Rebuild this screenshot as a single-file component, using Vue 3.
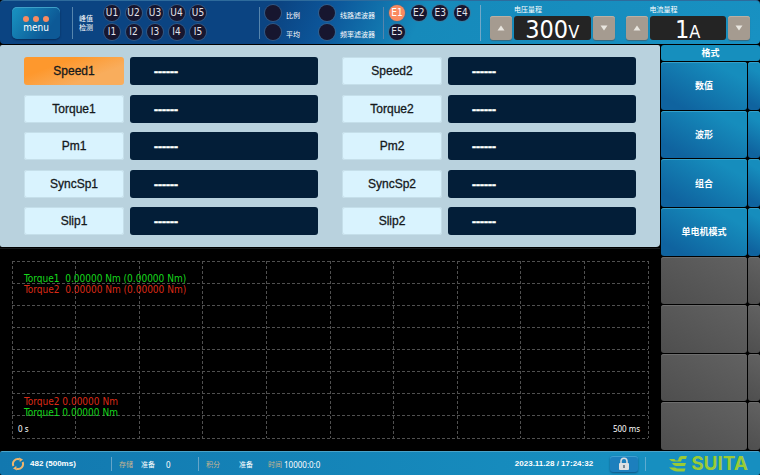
<script setup>
import { ref } from 'vue'

const inputs = ['U1', 'U2', 'U3', 'U4', 'U5', 'I1', 'I2', 'I3', 'I4', 'I5']
const elements = ['E1', 'E2', 'E3', 'E4', 'E5']
const activeElement = ref('E1')
const modes = [
  { id: 'ratio', label: '比例' },
  { id: 'line', label: '线路滤波器' },
  { id: 'average', label: '平均' },
  { id: 'freq', label: '频率滤波器' },
]
const ranges = [
  { label: '电压量程', value: '300', unit: 'V' },
  { label: '电流量程', value: '1', unit: 'A' },
]
const readings = [
  'Speed1', 'Speed2', 'Torque1', 'Torque2', 'Pm1',
  'Pm2', 'SyncSp1', 'SyncSp2', 'Slip1', 'Slip2',
]
const activeReading = ref('Speed1')
const softKeys = ['数值', '波形', '组合', '单电机模式', '', '', '', '']
const columns = Array.from({ length: 11 }, (_, i) => i * 10 + '%')
const rows = Array.from({ length: 9 }, (_, i) => i * 12.5 + '%')
</script>

<template>
  <div class="screen">
    <header class="topbar">
      <button class="menu" type="button">
        <span class="dots"><i></i><i></i><i></i></span>
        <span>menu</span>
      </button>
      <section class="peak">
        <div class="peak-label">峰值<br />检测</div>
        <div class="lamps five">
          <span v-for="name in inputs" :key="name" class="lamp">{{ name }}</span>
        </div>
      </section>
      <section class="modes">
        <label v-for="mode in modes" :key="mode.id" class="mode" :for="mode.id">
          <input :id="mode.id" class="lamp" type="checkbox" />
          <span>{{ mode.label }}</span>
        </label>
      </section>
      <section class="elements">
        <div class="lamps four">
          <button
            v-for="name in elements"
            :key="name"
            type="button"
            class="lamp"
            :class="{ on: name === activeElement }"
            @click="activeElement = name"
          >{{ name }}</button>
        </div>
      </section>
      <section class="ranges">
        <div v-for="range in ranges" :key="range.label" class="range">
          <span class="range-label">{{ range.label }}</span>
          <button class="step" type="button" :aria-label="range.label + ' +'">
            <svg width="8" height="6" viewBox="0 0 8 6"><path d="M4 .5 7.5 5.5h-7z" fill="#e9e6df" /></svg>
          </button>
          <output class="value">{{ range.value }}<small>{{ range.unit }}</small></output>
          <button class="step" type="button" :aria-label="range.label + ' -'">
            <svg width="8" height="6" viewBox="0 0 8 6"><path d="M4 5.5.5.5h7z" fill="#e9e6df" /></svg>
          </button>
        </div>
      </section>
    </header>

    <div class="body">
      <main class="main">
        <section class="panel">
          <div v-for="name in readings" :key="name" class="reading">
            <button
              type="button"
              class="name"
              :class="{ selected: name === activeReading }"
              @click="activeReading = name"
            >{{ name }}</button>
            <output class="readout">------</output>
          </div>
        </section>
        <section class="chart">
          <svg class="grid" width="100%" height="100%">
            <line v-for="x in columns" :key="'x' + x" :x1="x" :x2="x" y1="0" y2="100%" />
            <line v-for="y in rows" :key="'y' + y" :y1="y" :y2="y" x1="0" x2="100%" />
          </svg>
          <div class="legend">
            <div class="green">Torque1&nbsp; 0.00000 Nm (0.00000 Nm)</div>
            <div class="red">Torque2&nbsp; 0.00000 Nm (0.00000 Nm)</div>
          </div>
          <div class="legend low">
            <div class="red">Torque2 0.00000 Nm</div>
            <div class="green">Torque1 0.00000 Nm</div>
          </div>
          <div class="axis"><span>0 s</span><span>500 ms</span></div>
        </section>
      </main>
      <aside class="side">
        <h2 class="side-title">格式</h2>
        <div v-for="(key, i) in softKeys" :key="i" class="key-row">
          <button class="key" :class="{ off: !key }" :disabled="!key" type="button">{{ key }}</button>
          <span class="key edge" :class="{ off: !key }"></span>
        </div>
      </aside>
    </div>

    <footer class="status">
      <svg class="refresh" width="14" height="14" viewBox="0 0 14 14" fill="none" stroke="#f0b56c" stroke-width="2">
        <path d="M2.400 9A5 5 0 0 1 8.500 2.200" />
        <path d="M11.600 5A5 5 0 0 1 5.500 11.800" />
        <path d="M8 .5 12 2.500 8.800 5zM6 13.500 2 11.500 5.200 9z" fill="#f0b56c" stroke="none" />
      </svg>
      <span class="update">482 (500ms)</span>
      <div class="store"><span class="amber">存储</span><span>准备</span><span class="count">0</span></div>
      <div class="integral">
        <span class="amber">积分</span><span class="state">准备</span>
        <span class="timer"><span class="amber">时间</span><span class="digits">10000:0:0</span></span>
      </div>
      <time class="clock">2023.11.28 / 17:24:32</time>
      <button class="lock" type="button" aria-label="Lock">
        <svg width="12" height="14" viewBox="0 0 12 14">
          <path d="M3 6.500V4.200a3 3 0 0 1 6 0V6.500" fill="none" stroke="#d7dce0" stroke-width="1.600" />
          <rect x="1" y="6" width="10" height="7" rx="1" fill="#dde0e2" />
          <path d="M6 8v3" stroke="#5d7180" stroke-width="1.600" />
        </svg>
      </button>
      <div class="brand">
        <svg width="18" height="18" viewBox="0 0 18 18" fill="#9acb35">
          <path d="M0 4h5.500l1 1.500H9L9.800 3Q10.500 1 12.500 1H18l-1 3h-4l-1 2.500H5.500Q2.500 7 0 4z" />
          <path d="M3 8h14l-1 3H7.500Q4.500 11 3 8z" />
          <path d="M0 12.500h6l2 1h8.500l-1 3H8.500Q4 16.500 0 12.500z" />
        </svg>
        <span>SUITA</span>
      </div>
    </footer>
  </div>
</template>

<style>
body {
  margin: 0;
  background: #000;
}
</style>

<style scoped>
* {
  box-sizing: border-box;
}
button {
  border: 0;
  padding: 0;
  margin: 0;
  font-family: inherit;
  color: inherit;
}
.screen {
  min-height: 100vh;
  display: flex;
  flex-direction: column;
  gap: 1px;
  background: #000;
  color: #fff;
  font-family: "Noto Sans", "Noto Sans CJK SC", sans-serif;
}
.topbar {
  height: 44px;
  flex: none;
  display: flex;
  align-items: center;
  padding: 0 10px 0 12px;
  border-radius: 4px;
  border-top: 1px solid #2e6b9c;
  background: linear-gradient(115deg, #0b4482 36%, #0c569a 43%, #168abb 55%, #1891c2 100%);
}
.menu {
  width: 48px;
  height: 32px;
  flex: none;
  display: flex;
  flex-direction: column;
  align-items: center;
  justify-content: center;
  border-radius: 5px;
  background: linear-gradient(125deg, #178dbd 10%, #0d5996 75%);
  box-shadow: 0 1px 2px #062a57, inset 0 1px 0 #3fa0c8;
  font-family: "DejaVu Sans Condensed", "DejaVu Sans", sans-serif;
  font-size: 10px;
  line-height: 11px;
}
.dots {
  display: flex;
  gap: 4px;
  padding-top: 3px;
}
.dots i {
  width: 6px;
  height: 6px;
  border-radius: 50%;
  background: #f88b60;
}
.peak,
.modes,
.elements,
.ranges {
  height: 32px;
  flex: none;
  display: flex;
  align-items: center;
  border-left: 1px solid #5685ad;
}
.peak {
  gap: 10px;
  margin-left: 12px;
  padding-left: 6px;
}
.peak-label {
  font-size: 7px;
  line-height: 9px;
  width: 15px;
  white-space: nowrap;
}
.lamps {
  display: grid;
  justify-content: space-between;
  row-gap: 3px;
}
.five {
  grid-template-columns: repeat(5, 16px);
  width: 102px;
}
.four {
  grid-template-columns: repeat(4, 16px);
  width: 81px;
}
.lamp {
  width: 16px;
  height: 16px;
  margin: 0;
  display: flex;
  align-items: center;
  justify-content: center;
  appearance: none;
  border-radius: 50%;
  background: #17162f;
  box-shadow: 0 0 0 1px rgba(90, 105, 130, 0.5);
  color: #e4e4ea;
  font-family: "DejaVu Sans Condensed", "DejaVu Sans", sans-serif;
  font-size: 10px;
  line-height: 16px;
}
.lamp.on,
.lamp:checked {
  background: #fa8a5f;
  color: #fff;
}
.modes {
  display: grid;
  grid-template-columns: 54px auto;
  align-content: center;
  row-gap: 3px;
  margin-left: 53px;
  padding-left: 5px;
}
.mode {
  display: flex;
  align-items: center;
  gap: 5px;
  height: 16px;
  font-size: 7px;
  line-height: 9px;
  padding: 0;
  white-space: nowrap;
}
.mode span {
  padding-top: 4px;
}
.elements {
  margin-left: 8px;
  padding-left: 5px;
}
.ranges {
  flex: 1;
  height: 36px;
  margin-left: 10px;
  padding-left: 9px;
  gap: 11px;
  border-left-color: #72a8c8;
}
.range {
  flex: 1;
  display: grid;
  grid-template-columns: 22px 1fr 22px;
  grid-template-rows: 11px 24px;
  column-gap: 2px;
}
.range-label {
  grid-column: 2 / 4;
  font-size: 7px;
  line-height: 9px;
}
.step {
  display: grid;
  place-items: center;
  border-radius: 3px;
  background: #a59b90;
  box-shadow: 0 1px 1px #37687d, inset 0 1px 0 #bbb0a4;
}
.value {
  display: flex;
  align-items: baseline;
  justify-content: center;
  border-radius: 3px;
  background: #242424;
  font-family: "DejaVu Sans Condensed", "DejaVu Sans", sans-serif;
  font-size: 25px;
  line-height: 27px;
  height: 24px;
}
.value small {
  font-size: 18px;
}
.body {
  flex: 1;
  display: flex;
  gap: 1px;
}
.main {
  flex: 1;
  display: flex;
  flex-direction: column;
}
.panel {
  height: 202px;
  display: grid;
  grid-template-columns: 1fr 1fr;
  grid-auto-rows: 28px;
  align-content: space-between;
  column-gap: 24px;
  padding: 12px 24px;
  border-radius: 2px 2px 4px 2px;
  background: #b9d2de;
}
.reading {
  display: grid;
  grid-template-columns: 100px 1fr;
  gap: 6px;
  font-family: "Liberation Sans", Arial, sans-serif;
}
.name {
  border-radius: 3px;
  background: #d9f3fe;
  box-shadow: inset 0 0 0 1px #c5dfea;
  color: #15191c;
  font-size: 12px;
  -webkit-text-stroke: 0.3px #15191c;
}
.name.selected {
  background: linear-gradient(160deg, #fe982d 30%, #f9ad5c 70%);
  box-shadow: none;
}
.readout {
  display: flex;
  align-items: center;
  padding: 2px 0 0 24px;
  border-radius: 3px;
  background: #031e38;
  font-size: 12px;
  font-weight: 700;
  line-height: 20px;
  -webkit-text-stroke: 0.5px #fff;
}
.chart {
  flex: 1;
  display: flex;
  flex-direction: column;
  position: relative;
  margin-top: 1px;
  border-top: 1px solid #181b1d;
  padding: 24px 20px 12px 18px;
}
.grid {
  position: absolute;
  inset: 12px 12px 12px 12px;
  width: calc(100% - 24px);
  height: calc(100% - 24px);
  overflow: visible;
}
.grid line {
  stroke: #505050;
  stroke-width: 1px;
  stroke-dasharray: 3 2;
  shape-rendering: crispEdges;
}
.legend {
  position: relative;
  padding-left: 6px;
  font-family: "DejaVu Sans Condensed", "DejaVu Sans", sans-serif;
  font-size: 10px;
  line-height: 11px;
}
.low {
  margin-top: auto;
}
.green {
  color: #16d81c;
}
.red {
  color: #dc2a16;
}
.axis {
  position: relative;
  display: flex;
  justify-content: space-between;
  padding: 6px 0 4px;
  font-size: 8px;
  line-height: 10px;
}
.side {
  width: 99px;
  flex: none;
  display: flex;
  flex-direction: column;
  gap: 1px;
}
.side-title {
  margin: 0;
  height: 16px;
  border-radius: 3px;
  background: #168fbe;
  font-size: 9px;
  font-weight: 700;
  line-height: 16px;
  text-align: center;
}
.key-row {
  flex: 1;
  display: grid;
  grid-template-columns: 1fr 12px;
  gap: 1px;
}
.key {
  border-radius: 3px;
  background: linear-gradient(30deg, #0f639f 15%, #168dbd 80%);
  box-shadow: inset 0 1px 0 #33a0ca;
  color: #fff;
  font-size: 9px;
  font-weight: 700;
}
.key.off {
  background: linear-gradient(30deg, #4e4e4e, #626262);
  box-shadow: inset 0 1px 0 #6d6d6d;
}
.status {
  height: 24px;
  flex: none;
  display: flex;
  align-items: center;
  padding: 1px 12px 0 11px;
  border-top: 1px solid #4aa3c9;
  border-radius: 2px;
  background: linear-gradient(90deg, #1278af, #178fc0 80%);
  font-size: 7px;
  white-space: nowrap;
}
.update,
.clock {
  font-family: "Liberation Sans", Arial, sans-serif;
  font-size: 8px;
  font-weight: 700;
  line-height: 14px;
}
.update {
  margin-left: 5px;
  width: 81px;
}
.store,
.integral {
  height: 14px;
  display: flex;
  align-items: center;
  padding-left: 7px;
  border-left: 1px solid #65a5c9;
}
.store {
  width: 87px;
  gap: 8px;
}
.count {
  margin-left: 3px;
  font-size: 8px;
}
.integral {
  gap: 15px;
}
.state {
  margin-left: 4px;
}
.timer {
  display: flex;
  align-items: center;
  gap: 2px;
}
.digits {
  font-size: 8px;
}
.amber {
  color: #c9b58f;
}
.clock {
  margin-left: auto;
}
.lock {
  width: 28px;
  height: 16px;
  margin-left: 17px;
  display: grid;
  place-items: center;
  border-radius: 3px;
  background: #1c7fbd;
  box-shadow: 0 1px 2px #0f5583, inset 0 1px 0 #3d9fd0;
}
.brand {
  margin-left: 7px;
  padding-left: 23px;
  border-left: 1px solid #5eabd0;
  height: 14px;
  display: flex;
  align-items: center;
  gap: 4px;
  color: #9acb35;
  font-family: Inter, sans-serif;
  font-size: 19px;
  font-weight: 700;
  line-height: 18px;
}
</style>
